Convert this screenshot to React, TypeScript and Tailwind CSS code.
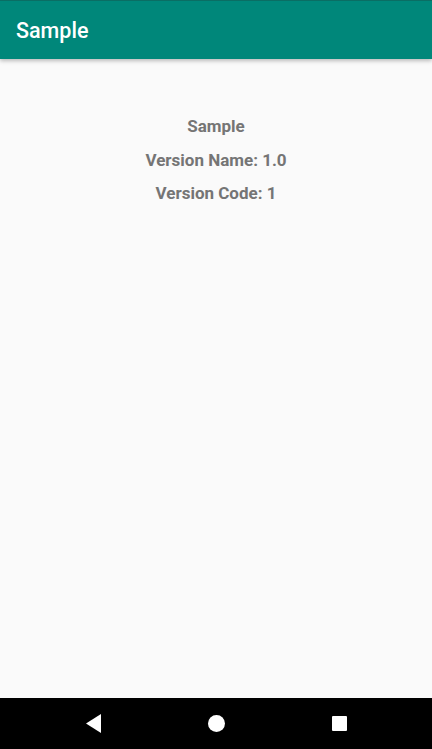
import React from "react";

export default function App() {
  return (
    <div className="w-[432px] h-[749px] flex flex-col bg-[#fafafa] overflow-hidden" style={{ fontFamily: "Roboto, 'Liberation Sans', sans-serif" }}>
      <div className="relative z-10 h-[59px] shrink-0 bg-[#00877a] border-t border-[#0a6e64] flex items-center px-4 pt-[2px] shadow-[0_2px_4px_rgba(0,0,0,0.25)]">
        <span className="text-white text-[21.5px] font-medium">Sample</span>
      </div>
      <div className="flex-1 flex flex-col items-center pt-[56px] gap-[11px] text-[#757575] text-[17px] font-bold leading-[22.5px]">
        <div>Sample</div>
        <div>Version Name: 1.0</div>
        <div>Version Code: 1</div>
      </div>
      <div className="h-[51px] shrink-0 bg-black flex items-center">
        <div className="w-[186px] flex justify-center">
          <svg width="16" height="19" viewBox="0 0 16 19" className="ml-[2px]">
            <polygon points="15,0 15,19 0,9.5" fill="#fff" />
          </svg>
        </div>
        <div className="w-[60px] flex justify-center">
          <div className="w-[17px] h-[17px] rounded-full bg-white" />
        </div>
        <div className="w-[186px] flex justify-center">
          <div className="w-[15px] h-[15px] bg-white rounded-[1px]" />
        </div>
      </div>
    </div>
  );
}
